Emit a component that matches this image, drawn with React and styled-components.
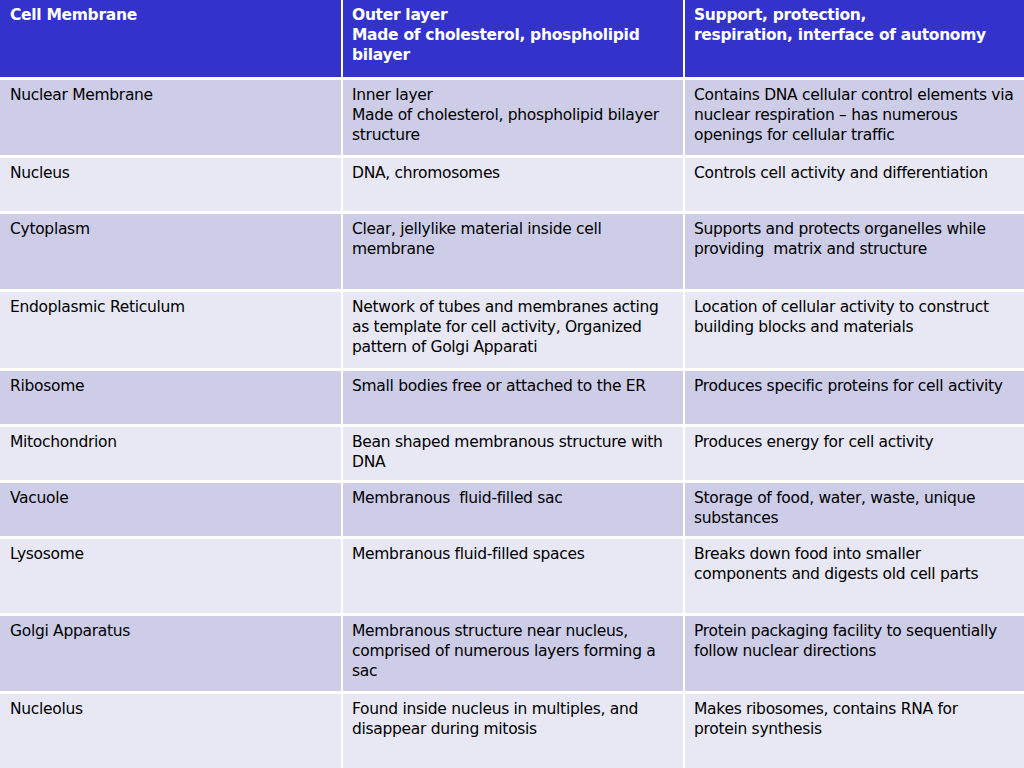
import styled, { createGlobalStyle } from 'styled-components'

const GlobalStyle = createGlobalStyle`
    html, body {
        margin: 0;
        padding: 0;
        background: #ffffff;
    }
    body {
        font-family: "DejaVu Sans", Verdana, sans-serif;
    }
`

const Table = styled.div`
    width: 1024px;
    height: 768px;
    overflow: hidden;
    display: grid;
    grid-template-columns: 341px 340px 1fr;
    column-gap: 2px;
    row-gap: 3px;
    background: #ffffff;
`

const Cell = styled.div`
    height: ${p => p.h}px;
    padding: 5px 8px 0 ${p => (p.first ? 10 : 9)}px;
    box-sizing: border-box;
    font-size: 15.5px;
    line-height: 20px;
    letter-spacing: -0.3px;
    color: ${p => (p.head ? '#ffffff' : '#000000')};
    font-weight: ${p => (p.head ? 700 : 400)};
    background: ${p => (p.head ? '#3333cc' : p.odd ? '#cdcde8' : '#e8e8f4')};
    white-space: pre-wrap;
`

const header = [
    'Cell Membrane',
    'Outer layer\nMade of cholesterol, phospholipid\nbilayer',
    'Support, protection,\nrespiration, interface of autonomy',
]

const rows = [
    ['Nuclear Membrane', 'Inner layer\nMade of cholesterol, phospholipid bilayer structure', 'Contains DNA cellular control elements via nuclear respiration – has numerous openings for cellular traffic', 75],
    ['Nucleus', 'DNA, chromosomes', 'Controls cell activity and differentiation', 53],
    ['Cytoplasm', 'Clear, jellylike material inside cell membrane', 'Supports and protects organelles while providing  matrix and structure', 75],
    ['Endoplasmic Reticulum', 'Network of tubes and membranes acting as template for cell activity, Organized pattern of Golgi Apparati', 'Location of cellular activity to construct building blocks and materials', 76],
    ['Ribosome', 'Small bodies free or attached to the ER', 'Produces specific proteins for cell activity', 53],
    ['Mitochondrion', 'Bean shaped membranous structure with DNA', 'Produces energy for cell activity', 53],
    ['Vacuole', 'Membranous  fluid-filled sac', 'Storage of food, water, waste, unique substances', 53],
    ['Lysosome', 'Membranous fluid-filled spaces', 'Breaks down food into smaller components and digests old cell parts', 74],
    ['Golgi Apparatus', 'Membranous structure near nucleus, comprised of numerous layers forming a sac', 'Protein packaging facility to sequentially follow nuclear directions', 75],
    ['Nucleolus', 'Found inside nucleus in multiples, and disappear during mitosis', 'Makes ribosomes, contains RNA for\nprotein synthesis', 75],
]

const App = () => {
    return (
        <>
            <GlobalStyle />
            <Table>
                {header.map((t, i) => (
                    <Cell key={'h' + i} head first={i === 0} h={77}>{t}</Cell>
                ))}
                {rows.map((r, ri) =>
                    r.slice(0, 3).map((t, ci) => (
                        <Cell key={ri + '-' + ci} first={ci === 0} odd={ri % 2 === 0} h={r[3]}>{t}</Cell>
                    ))
                )}
            </Table>
        </>
    )
}

export default App
